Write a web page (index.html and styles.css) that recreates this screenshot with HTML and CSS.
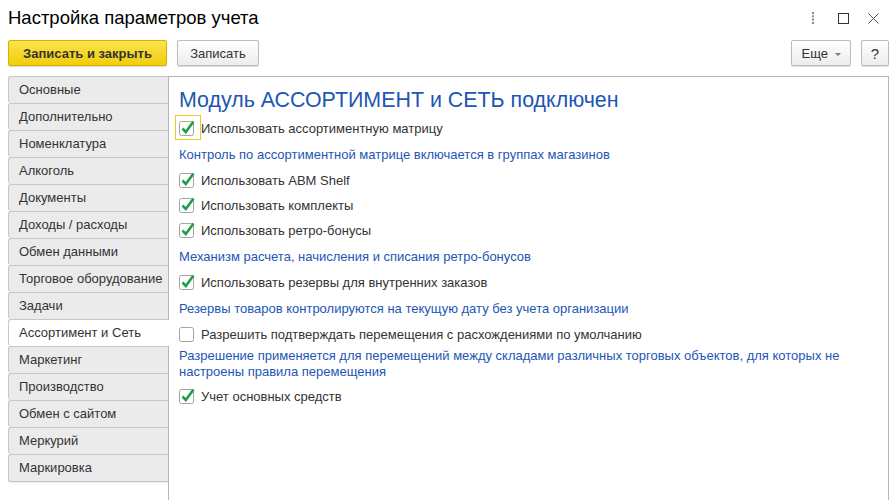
FILE: index.html
```html
<!DOCTYPE html>
<html lang="ru">
<head>
  <meta charset="UTF-8" />
  <title>Настройка параметров учета</title>
  <link rel="stylesheet" href="styles.css">
</head>
<body>
  <div class="head">
    <h1>Настройка параметров учета</h1>
    <div class="win-btns">
      <span class="win-btn">
        <svg width="4" height="12" viewBox="0 0 4 12"><g fill="#8a8a8a"><rect x="1" y="0" width="2" height="2"/><rect x="1" y="3.3" width="2" height="2"/><rect x="1" y="6.6" width="2" height="2"/><rect x="1" y="10" width="2" height="2"/></g></svg>
      </span>
      <span class="win-btn">
        <svg width="11" height="11" viewBox="0 0 11 11"><rect x="0.5" y="0.5" width="10" height="10" fill="none" stroke="#333"/></svg>
      </span>
      <span class="win-btn">
        <svg width="11" height="11" viewBox="0 0 11 11"><path d="M0.5 0.5 L10.5 10.5 M10.5 0.5 L0.5 10.5" stroke="#555" stroke-width="1"/></svg>
      </span>
    </div>
  </div>

  <div class="toolbar">
    <button class="btn btn-main">Записать и закрыть</button>
    <button class="btn btn-save">Записать</button>
    <div class="spacer"></div>
    <button class="btn btn-more">Еще <span class="caret"></span></button>
    <button class="btn btn-help">?</button>
  </div>

  <div class="main">
    <div class="tabs">
      <div class="tab">Основные</div>
      <div class="tab">Дополнительно</div>
      <div class="tab">Номенклатура</div>
      <div class="tab">Алкоголь</div>
      <div class="tab">Документы</div>
      <div class="tab">Доходы / расходы</div>
      <div class="tab">Обмен данными</div>
      <div class="tab">Торговое оборудование</div>
      <div class="tab">Задачи</div>
      <div class="tab active">Ассортимент и Сеть</div>
      <div class="tab">Маркетинг</div>
      <div class="tab">Производство</div>
      <div class="tab">Обмен с сайтом</div>
      <div class="tab">Меркурий</div>
      <div class="tab last">Маркировка</div>
    </div>

    <div class="content">
      <h2>Модуль АССОРТИМЕНТ и СЕТЬ подключен</h2>

      <label class="check">
        <span class="box focus"><svg width="18" height="18" viewBox="0 0 18 18"><rect x="0.5" y="3.5" width="14" height="14" rx="2" fill="#fff" stroke="#a3a3a3"/><path d="M3.5 10.5 L6.8 14 L14.5 3.5" fill="none" stroke="#1f9e45" stroke-width="2.6"/></svg></span>
        Использовать ассортиментную матрицу
      </label>
      <div class="note">Контроль по ассортиментной матрице включается в группах магазинов</div>

      <label class="check">
        <span class="box"><svg width="18" height="18" viewBox="0 0 18 18"><rect x="0.5" y="3.5" width="14" height="14" rx="2" fill="#fff" stroke="#a3a3a3"/><path d="M3.5 10.5 L6.8 14 L14.5 3.5" fill="none" stroke="#1f9e45" stroke-width="2.6"/></svg></span>
        Использовать ABM Shelf
      </label>
      <label class="check">
        <span class="box"><svg width="18" height="18" viewBox="0 0 18 18"><rect x="0.5" y="3.5" width="14" height="14" rx="2" fill="#fff" stroke="#a3a3a3"/><path d="M3.5 10.5 L6.8 14 L14.5 3.5" fill="none" stroke="#1f9e45" stroke-width="2.6"/></svg></span>
        Использовать комплекты
      </label>
      <label class="check">
        <span class="box"><svg width="18" height="18" viewBox="0 0 18 18"><rect x="0.5" y="3.5" width="14" height="14" rx="2" fill="#fff" stroke="#a3a3a3"/><path d="M3.5 10.5 L6.8 14 L14.5 3.5" fill="none" stroke="#1f9e45" stroke-width="2.6"/></svg></span>
        Использовать ретро-бонусы
      </label>
      <div class="note">Механизм расчета, начисления и списания ретро-бонусов</div>

      <label class="check">
        <span class="box"><svg width="18" height="18" viewBox="0 0 18 18"><rect x="0.5" y="3.5" width="14" height="14" rx="2" fill="#fff" stroke="#a3a3a3"/><path d="M3.5 10.5 L6.8 14 L14.5 3.5" fill="none" stroke="#1f9e45" stroke-width="2.6"/></svg></span>
        Использовать резервы для внутренних заказов
      </label>
      <div class="note">Резервы товаров контролируются на текущую дату без учета организации</div>

      <label class="check">
        <span class="box"><svg width="18" height="18" viewBox="0 0 18 18"><rect x="0.5" y="3.5" width="14" height="14" rx="2" fill="#fff" stroke="#a3a3a3"/></svg></span>
        Разрешить подтверждать перемещения с расхождениями по умолчанию
      </label>
      <div class="note note-tight">Разрешение применяется для перемещений между складами различных торговых объектов, для которых не настроены правила перемещения</div>

      <label class="check">
        <span class="box"><svg width="18" height="18" viewBox="0 0 18 18"><rect x="0.5" y="3.5" width="14" height="14" rx="2" fill="#fff" stroke="#a3a3a3"/><path d="M3.5 10.5 L6.8 14 L14.5 3.5" fill="none" stroke="#1f9e45" stroke-width="2.6"/></svg></span>
        Учет основных средств
      </label>
    </div>
  </div>
</body>
</html>
```

FILE: styles.css
```css
body {
  margin: 0;
  padding: 0 3px 0 8px;
  font-family: Arial, "Liberation Sans", sans-serif;
  font-size: 13px;
  color: #333;
  background: #fff;
  overflow: hidden;
}
.head {
  display: flex;
  align-items: center;
  height: 34px;
  padding-top: 1px;
}
h1 {
  flex: 1;
  margin: 0;
  font-size: 18.5px;
  font-weight: normal;
  color: #000;
}
.win-btns {
  display: flex;
  align-items: center;
  margin-right: 1px;
}
.win-btn {
  display: flex;
  align-items: center;
  justify-content: center;
  width: 30px;
  height: 20px;
}
.toolbar {
  display: flex;
  align-items: center;
  margin-top: 5px;
}
.spacer {
  flex: 1;
}
.btn {
  height: 26px;
  padding: 0 12px;
  font-family: inherit;
  font-size: 13px;
  color: #333;
  border: 1px solid #bdbdbd;
  border-radius: 2px;
  background: linear-gradient(#ffffff, #ececec);
  box-shadow: 0 1px 1px rgba(0,0,0,0.15);
}
.btn-main {
  width: 159px;
  margin-right: 10px;
  font-weight: bold;
  border-color: #d4b300;
  background: linear-gradient(#fbe44c, #f1cd0c);
}
.btn-save {
  width: 82px;
}
.btn-more {
  width: 60px;
  margin-right: 10px;
  padding: 0 8px;
}
.caret {
  display: inline-block;
  margin-left: 3px;
  vertical-align: middle;
  border-left: 3px solid transparent;
  border-right: 3px solid transparent;
  border-top: 3px solid #777;
}
.btn-help {
  width: 28px;
  padding: 0;
  font-size: 15px;
}
.main {
  display: flex;
  margin-top: 10px;
  height: 430px;
}
.tabs {
  width: 160px;
  display: flex;
  flex-direction: column;
}
.tab {
  height: 26px;
  line-height: 26px;
  padding-left: 10px;
  background: #ebebeb;
  border: 1px solid #c6c6c6;
  border-right: none;
  border-bottom: none;
  border-radius: 3px 0 0 3px;
  white-space: nowrap;
}
.tab.last {
  border-bottom: 1px solid #c6c6c6;
  box-shadow: 0 1px 1px rgba(0,0,0,0.08);
}
.tab.active {
  background: #fff;
  margin-right: -1px;
  position: relative;
  z-index: 1;
}
.content {
  flex: 1;
  border: 1px solid #b5b5b5;
  border-bottom: none;
  padding: 10px 0 0 10px;
}
h2 {
  margin: 0 0 3px;
  font-size: 21.4px;
  line-height: 26px;
  font-weight: normal;
  color: #1d56b4;
}
.check {
  display: flex;
  align-items: center;
  height: 25px;
  margin-left: -4px;
}
.box {
  display: flex;
  padding: 2px 3px 3px;
  border: 1px solid transparent;
  margin-top: -3px;
}
.box.focus {
  border-color: #f4c71c;
}
.note {
  padding: 6px 0 5px;
  line-height: 16px;
  color: #1d56b4;
  max-width: 680px;
}
.note-tight {
  padding: 1px 0 4px;
}
```
